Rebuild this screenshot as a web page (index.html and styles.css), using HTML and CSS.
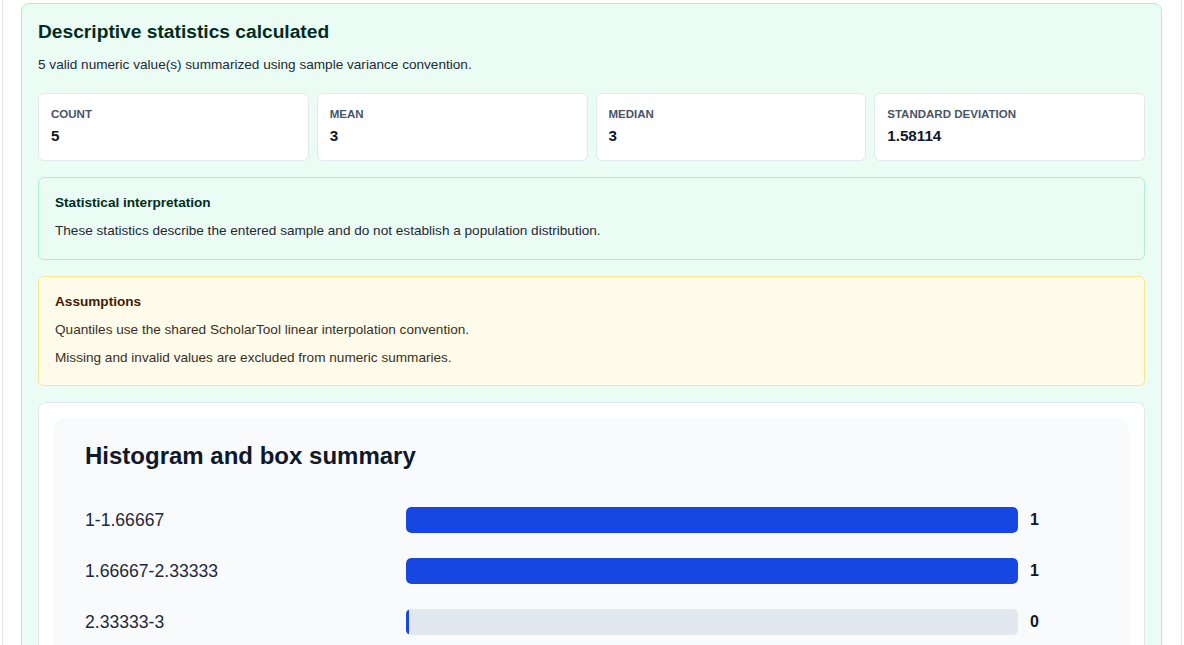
FILE: index.html
```html
<!DOCTYPE html>
<html lang="en">
<head>
    <meta charset="UTF-8">
    <meta name="viewport" content="width=device-width, initial-scale=1.0">
    <title>Descriptive statistics</title>
    <link rel="stylesheet" href="styles.css">
</head>
<body>
    <div class="page">
        <section class="result">
            <h2>Descriptive statistics calculated</h2>
            <p class="summary">5 valid numeric value(s) summarized using sample variance convention.</p>

            <div class="stats">
                <div class="stat">
                    <div class="stat-label">Count</div>
                    <div class="stat-value">5</div>
                </div>
                <div class="stat">
                    <div class="stat-label">Mean</div>
                    <div class="stat-value">3</div>
                </div>
                <div class="stat">
                    <div class="stat-label">Median</div>
                    <div class="stat-value">3</div>
                </div>
                <div class="stat">
                    <div class="stat-label">Standard deviation</div>
                    <div class="stat-value">1.58114</div>
                </div>
            </div>

            <div class="note note-info">
                <h4>Statistical interpretation</h4>
                <p>These statistics describe the entered sample and do not establish a population distribution.</p>
            </div>

            <div class="note note-warn">
                <h4>Assumptions</h4>
                <p>Quantiles use the shared ScholarTool linear interpolation convention.</p>
                <p>Missing and invalid values are excluded from numeric summaries.</p>
            </div>

            <div class="chart-card">
                <div class="chart">
                    <h3>Histogram and box summary</h3>
                    <div class="bins">
                        <div class="bin">
                            <span class="bin-label">1-1.66667</span>
                            <div class="track"><div class="fill" style="width: 100%"></div></div>
                            <span class="bin-count">1</span>
                        </div>
                        <div class="bin">
                            <span class="bin-label">1.66667-2.33333</span>
                            <div class="track"><div class="fill" style="width: 100%"></div></div>
                            <span class="bin-count">1</span>
                        </div>
                        <div class="bin">
                            <span class="bin-label">2.33333-3</span>
                            <div class="track"><div class="fill" style="width: 0%"></div></div>
                            <span class="bin-count">0</span>
                        </div>
                        <div class="bin">
                            <span class="bin-label">3-3.66667</span>
                            <div class="track"><div class="fill" style="width: 100%"></div></div>
                            <span class="bin-count">1</span>
                        </div>
                    </div>
                </div>
            </div>
        </section>
    </div>
</body>
</html>
```

FILE: styles.css
```css
body {
    margin: 0;
    font-family: "Liberation Sans", Arial, sans-serif;
    background-color: #ffffff;
    color: #1f2937;
}
.page {
    margin: 0 2px;
    min-height: 700px;
    padding: 3px 19px 0 18px;
    border-left: 1px solid #e2e8f0;
    border-right: 1px solid #e2e8f0;
}
.result {
    background: #eafcf4;
    border: 1px solid #a7f3d0;
    border-radius: 8px;
    padding: 16px;
}
.result h2 {
    margin: 0 0 11px;
    font-size: 1.2rem;
    line-height: 24px;
    color: #022c22;
}
.summary {
    margin: 0 0 18px;
    font-size: 0.85rem;
    line-height: 20px;
    color: #1f2937;
}
.stats {
    display: grid;
    grid-template-columns: repeat(4, 1fr);
    gap: 8px;
    margin-bottom: 16px;
}
.stat {
    background: #ffffff;
    border: 1px solid #e2e8f0;
    border-radius: 6px;
    padding: 12px 12px 14px;
}
.stat-label {
    font-size: 0.72rem;
    line-height: 16px;
    font-weight: bold;
    text-transform: uppercase;
    color: #475569;
    margin-bottom: 4px;
}
.stat-value {
    font-size: 0.95rem;
    line-height: 20px;
    font-weight: bold;
    color: #0f172a;
}
.note {
    border-radius: 6px;
    padding: 16px 16px 18px;
    margin-bottom: 16px;
}
.note h4 {
    margin: 0 0 9px;
    font-size: 0.85rem;
    line-height: 18px;
}
.note p {
    margin: 8px 0 0;
    font-size: 0.85rem;
    line-height: 20px;
}
.note h4 + p {
    margin-top: 0;
}
.note-info {
    background: #eafcf4;
    border: 1px solid #a7f3d0;
}
.note-info h4 {
    color: #022c22;
}
.note-info p {
    color: #1f2937;
}
.note-warn {
    background: #fefbea;
    border: 1px solid #fde68a;
    padding-bottom: 17px;
}
.note-warn h4 {
    color: #451a03;
}
.note-warn p {
    color: #3b2f22;
}
.chart-card {
    background: #ffffff;
    border: 1px solid #e2e8f0;
    border-radius: 8px;
    padding: 15px;
}
.chart {
    background: #f8fafc;
    border-radius: 12px;
    padding: 24px 31px;
}
.chart h3 {
    margin: 0 0 37px;
    font-size: 1.5rem;
    line-height: 28px;
    color: #0f172a;
}
.bins {
    display: flex;
    flex-direction: column;
    gap: 25px;
}
.bin {
    display: grid;
    grid-template-columns: 309px 1fr 68px;
    gap: 12px;
    align-items: center;
}
.bin-label {
    font-size: 1.1rem;
    color: #1e293b;
}
.track {
    height: 26px;
    background: #e2e8f0;
    border-radius: 5px;
    overflow: hidden;
}
.fill {
    height: 100%;
    min-width: 3px;
    background: #1746e0;
    border-radius: 5px;
}
.bin-count {
    font-size: 1rem;
    font-weight: bold;
    color: #0f172a;
}
```
